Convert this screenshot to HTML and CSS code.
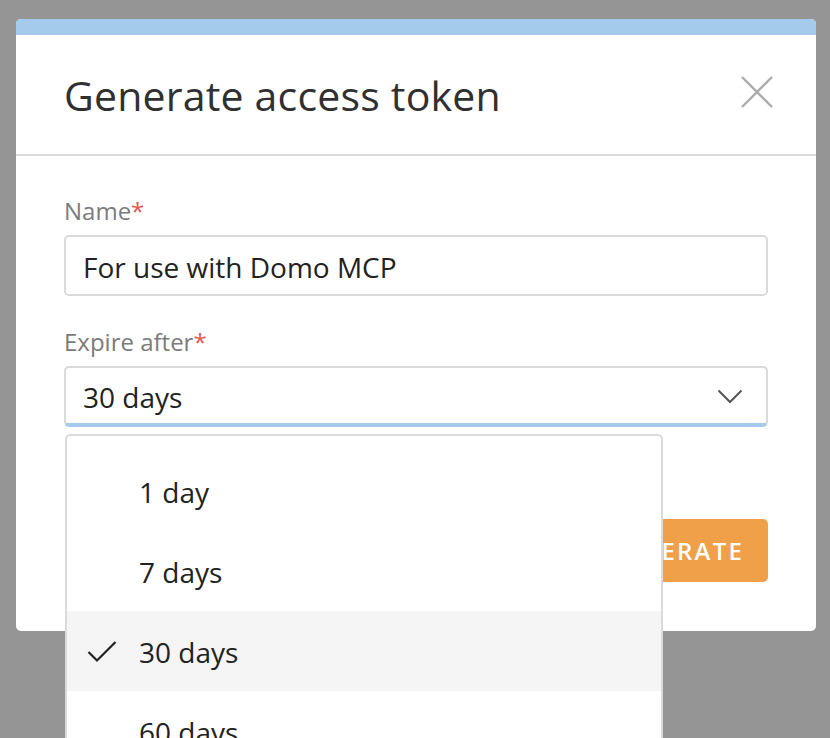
FILE: index.html
```html
<!DOCTYPE html>
<html lang="en">
<head>
<meta charset="utf-8">
<title>Generate access token</title>
<link rel="stylesheet" href="styles.css">
</head>
<body>
<div class="modal">
  <div class="modal-accent"></div>
  <div class="modal-header">
    <h1 class="modal-title">Generate access token</h1>
    <button class="close-btn" aria-label="Close">
      <svg width="34" height="34" viewBox="0 0 34 34"><path d="M2 2 L32 32 M32 2 L2 32" stroke="#ababab" stroke-width="2.4" fill="none"/></svg>
    </button>
  </div>
  <div class="modal-body">
    <div class="field">
      <label class="field-label">Name<span class="req">*</span></label>
      <div class="text-input">For use with Domo MCP</div>
    </div>
    <div class="field">
      <label class="field-label">Expire after<span class="req">*</span></label>
      <div class="select-wrap">
        <div class="select">
          <span>30 days</span>
          <svg class="chevron" width="26" height="15" viewBox="0 0 26 15"><path d="M1.5 1.5 L13 13 L24.5 1.5" stroke="#555" stroke-width="2" fill="none"/></svg>
        </div>
        <ul class="menu">
          <li class="menu-item"><span class="check"></span>1 day</li>
          <li class="menu-item"><span class="check"></span>7 days</li>
          <li class="menu-item selected"><span class="check"><svg width="30" height="22" viewBox="0 0 30 22"><path d="M1.5 11 L10 19.5 L28.5 1" stroke="#222" stroke-width="2.2" fill="none"/></svg></span>30 days</li>
          <li class="menu-item"><span class="check"></span>60 days</li>
          <li class="menu-item"><span class="check"></span>90 days</li>
        </ul>
      </div>
    </div>
    <div class="actions">
      <button class="btn-primary">GENERATE</button>
    </div>
  </div>
</div>
</body>
</html>
```

FILE: styles.css
```css
* { box-sizing: border-box; }

html, body {
  margin: 0;
  height: 100%;
  overflow: hidden;
}

body {
  background: #959595;
  font-family: "Open Sans", "Noto Sans", sans-serif;
  color: #222;
  padding: 19px 14px 0 16px;
}

.modal {
  width: 800px;
  height: 612px;
  background: #fff;
  border-radius: 5px;
  position: relative;
}

.modal-accent {
  height: 16px;
  background: #a4cbeb;
  border-radius: 5px 5px 0 0;
}

.modal-header {
  height: 121px;
  border-bottom: 2px solid #dcdcdc;
  display: flex;
  align-items: center;
  justify-content: space-between;
  padding: 0 42px 0 48px;
}

.modal-title {
  margin: 0;
  font-size: 41px;
  font-weight: 500;
  color: #303030;
  letter-spacing: 0.2px;
  line-height: 50px;
}

.close-btn {
  border: 0;
  background: none;
  padding: 0;
  width: 34px;
  height: 34px;
  margin-top: -6px;
  display: block;
}
.close-btn svg { display: block; }

.modal-body {
  padding: 40px 48px 0 48px;
}

.field { margin-bottom: 31px; }

.field-label {
  display: block;
  font-size: 24px;
  color: #7b7b7b;
  line-height: 30px;
  margin-bottom: 9px;
}
.req { color: #e2574c; }

.text-input,
.select {
  height: 61px;
  border: 2px solid #dadada;
  border-radius: 5px;
  font-size: 28px;
  line-height: 57px;
  padding: 0 17px;
  color: #222;
}

.text-input { line-height: 60px; }

.select-wrap { position: relative; }

.select {
  display: flex;
  align-items: center;
  justify-content: space-between;
  border-bottom: 4px solid #a4cbeb;
  padding-top: 4px;
  padding-right: 23px;
}
.select .chevron { display: block; margin-top: -2px; }

.menu {
  position: absolute;
  top: 68px;
  left: 1px;
  width: 598px;
  height: 320px;
  margin: 0;
  padding: 15px 0 0 0;
  list-style: none;
  background: #fff;
  border: 2px solid #dadada;
  border-bottom: 0;
  border-radius: 5px 5px 0 0;
  z-index: 2;
}

.menu-item {
  height: 80px;
  display: flex;
  align-items: center;
  font-size: 28px;
  color: #222;
  padding-left: 20px;
  padding-top: 2px;
}
.menu-item.selected { background: #f5f5f5; }

.check {
  width: 52px;
  display: flex;
  align-items: center;
}
.check svg { display: block; }

.actions {
  display: flex;
  justify-content: flex-end;
  margin-top: 92px;
}

.btn-primary {
  height: 63px;
  padding: 0 24px 0 28px;
  border: 0;
  border-radius: 5px;
  background: #f0a048;
  color: #fff;
  font-family: "Open Sans", sans-serif;
  font-size: 24px;
  font-weight: 600;
  letter-spacing: 2.2px;
}
```
